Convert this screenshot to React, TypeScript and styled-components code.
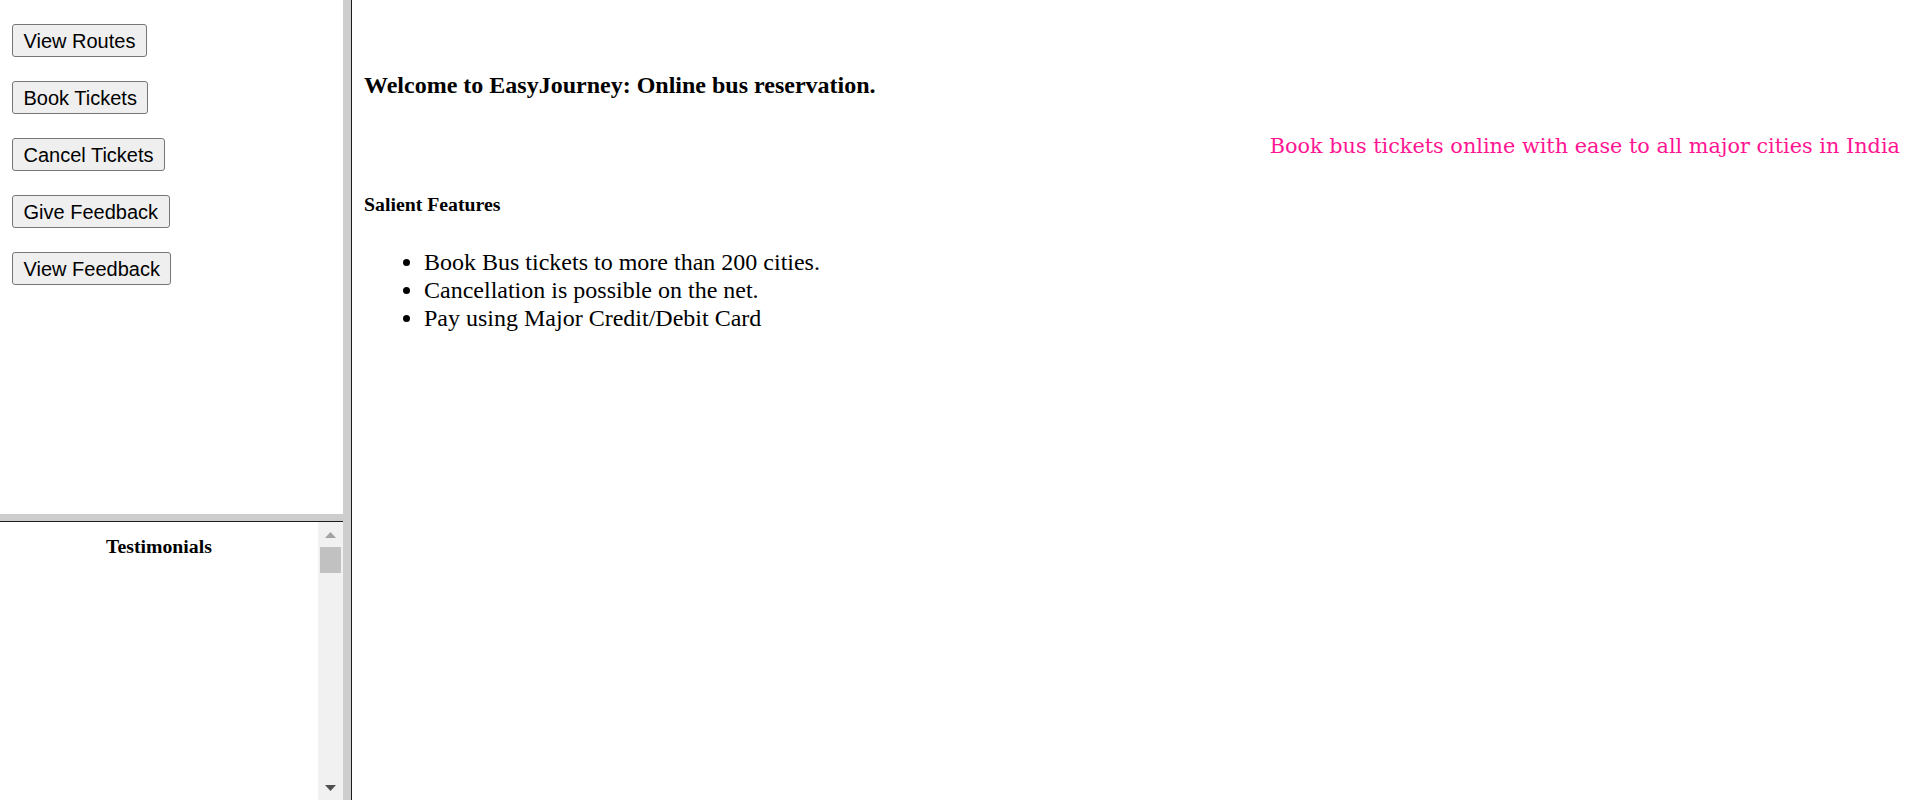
import styled, { createGlobalStyle } from 'styled-components'

const GlobalStyle = createGlobalStyle`
  html, body {
    margin: 0;
    height: 100%;
    overflow: hidden;
    background: #fff;
  }
  #root {
    height: 100%;
  }
`

const Frameset = styled.div`
  display: grid;
  grid-template-columns: 343px 9px 1fr;
  height: 800px;
`

const LeftSet = styled.div`
  display: grid;
  grid-template-rows: 514px 8px 1fr;
  min-height: 0;
`

const VBorder = styled.div`
  background: #cdcdcd;
  border-right: 1px solid #1c1c1c;
`

const HBorder = styled.div`
  background: #cdcdcd;
  border-bottom: 1px solid #1c1c1c;
`

const MenuFrame = styled.div`
  display: flex;
  flex-direction: column;
  align-items: flex-start;
  gap: 24px;
  padding: 24px 12px;
`

const NavButton = styled.button`
  height: 33px;
  padding: 0 10.5px;
  border: 1px solid #767676;
  border-radius: 3px;
  background: #efefef;
  color: #000;
  font-family: 'Liberation Sans', Arial, sans-serif;
  font-size: 20px;
  line-height: 1;
  cursor: default;
`

const TestimonialFrame = styled.div`
  display: flex;
  min-height: 0;
`

const TestimonialBody = styled.div`
  flex: 1;
  padding-top: 13px;
`

const SmallHeading = styled.h5<{ $center?: boolean }>`
  margin: 0;
  font-family: 'Liberation Serif', 'Times New Roman', serif;
  font-size: 19.8px;
  font-weight: bold;
  line-height: 22px;
  text-align: ${(p) => (p.$center ? 'center' : 'left')};
`

const Scrollbar = styled.div`
  width: 25px;
  background: #f1f1f1;
  display: flex;
  flex-direction: column;
  align-items: center;
`

const ArrowButton = styled.div`
  width: 25px;
  height: 25px;
  display: flex;
  align-items: center;
  justify-content: center;
`

const Thumb = styled.div`
  width: 21px;
  height: 26px;
  background: #c1c1c1;
`

const Track = styled.div`
  flex: 1;
`

const MainFrame = styled.div`
  padding: 0 12px;
  font-family: 'Liberation Serif', 'Times New Roman', serif;
  color: #000;
`

const Title = styled.h3`
  margin: 69px 0 0;
  font-size: 24px;
  font-weight: bold;
  line-height: 32px;
`

const Marquee = styled.div`
  margin-top: 30px;
  padding-right: 8px;
  text-align: right;
  color: #ff1493;
  font-family: 'DejaVu Serif', Georgia, serif;
  font-size: 20.8px;
  line-height: 30px;
  white-space: nowrap;
`

const Features = styled.div`
  margin-top: 32px;
`

const FeatureList = styled.ul`
  margin: 33px 0 0;
  padding-left: 60px;
  font-size: 24px;
  line-height: 28px;
`

const Arrow = ({ down, color }: { down?: boolean; color: string }) => (
  <svg width="11" height="6" viewBox="0 0 11 6">
    <polygon points={down ? '0,0 11,0 5.5,6' : '0,6 11,6 5.5,0'} fill={color} />
  </svg>
)

const menu = ['View Routes', 'Book Tickets', 'Cancel Tickets', 'Give Feedback', 'View Feedback']

const features = [
  'Book Bus tickets to more than 200 cities.',
  'Cancellation is possible on the net.',
  'Pay using Major Credit/Debit Card',
]

export default function App() {
  return (
    <>
      <GlobalStyle />
      <Frameset>
        <LeftSet>
          <MenuFrame>
            {menu.map((m) => (
              <NavButton key={m}>{m}</NavButton>
            ))}
          </MenuFrame>
          <HBorder />
          <TestimonialFrame>
            <TestimonialBody>
              <SmallHeading $center>Testimonials</SmallHeading>
            </TestimonialBody>
            <Scrollbar>
              <ArrowButton>
                <Arrow color="#a3a3a3" />
              </ArrowButton>
              <Thumb />
              <Track />
              <ArrowButton>
                <Arrow down color="#505050" />
              </ArrowButton>
            </Scrollbar>
          </TestimonialFrame>
        </LeftSet>
        <VBorder />
        <MainFrame>
          <Title>Welcome to EasyJourney: Online bus reservation.</Title>
          <Marquee>Book bus tickets online with ease to all major cities in India</Marquee>
          <Features>
            <SmallHeading>Salient Features</SmallHeading>
            <FeatureList>
              {features.map((f) => (
                <li key={f}>{f}</li>
              ))}
            </FeatureList>
          </Features>
        </MainFrame>
      </Frameset>
    </>
  )
}
